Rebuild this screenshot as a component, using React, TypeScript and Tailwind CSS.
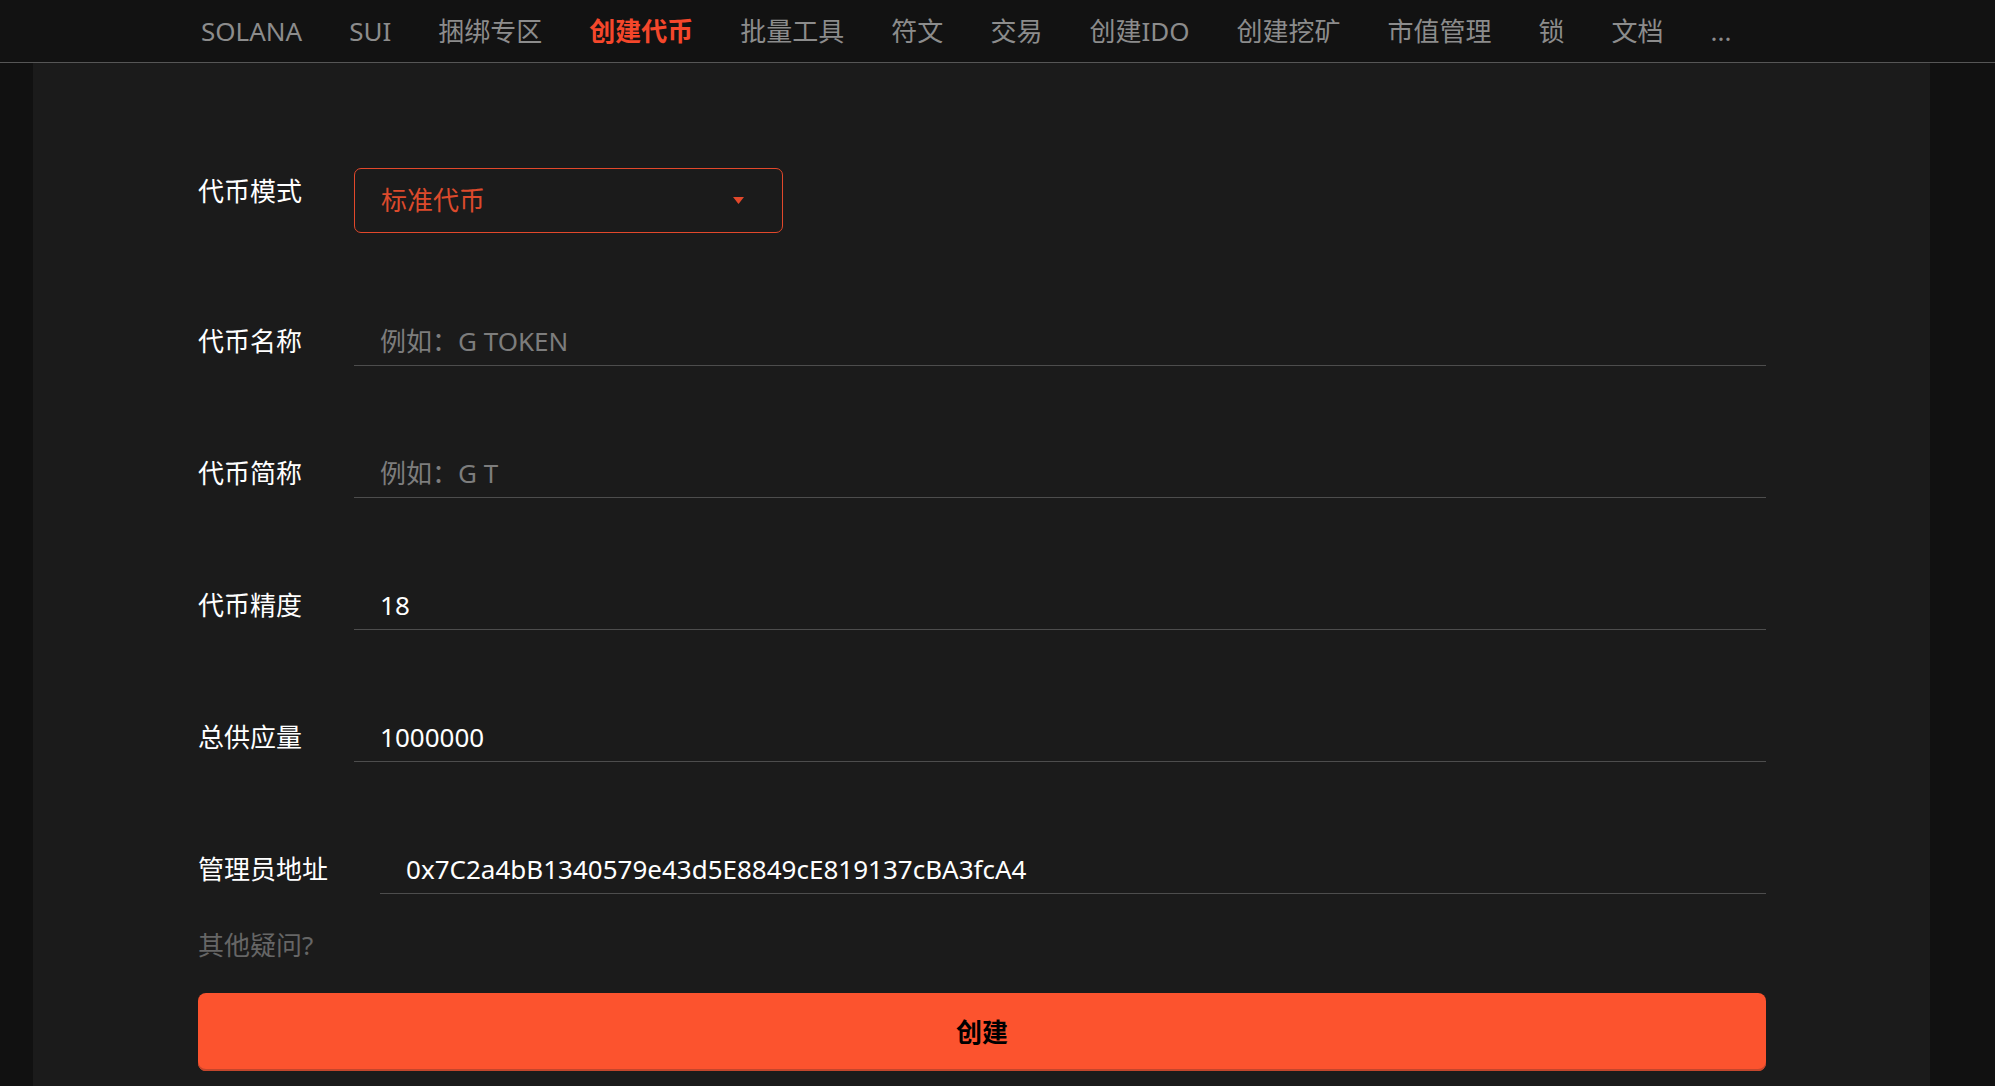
import React from 'react';

const navItems = ['SOLANA', 'SUI', '捆绑专区', '创建代币', '批量工具', '符文', '交易', '创建IDO', '创建挖矿', '市值管理', '锁', '文档', '...'];

const fields = [
  { label: '代币名称', placeholder: '例如：G TOKEN', value: '' },
  { label: '代币简称', placeholder: '例如：G T', value: '' },
  { label: '代币精度', placeholder: '', value: '18' },
  { label: '总供应量', placeholder: '', value: '1000000' },
  { label: '管理员地址', placeholder: '', value: '0x7C2a4bB1340579e43d5E8849cE819137cBA3fcA4' },
];

export default function App() {
  return (
    <div className="min-h-screen bg-[#111111] font-['Noto_Sans','Noto_Sans_CJK_SC',sans-serif]">
      <nav className="flex h-[63px] items-center gap-[47px] border-b border-[#565656] bg-[#121212] pl-[201px]">
        {navItems.map((item) => (
          <a
            key={item}
            className={`cursor-pointer text-[26px] leading-none ${
              item === '创建代币' ? 'font-bold text-[#f5472b]' : 'text-[#8c8c8c]'
            }`}
          >
            {item}
          </a>
        ))}
      </nav>

      <main className="ml-[33px] mr-[65px] min-h-[1023px] bg-[#1b1b1b] pl-[165px] pr-[164px] pt-[105px]">
        <div className="flex items-start gap-[52px]">
          <label className="pt-[4px] text-[26px] leading-[39px] whitespace-nowrap text-white">代币模式</label>
          <div className="flex h-[65px] w-[429px] cursor-pointer items-center justify-between rounded-[7px] border border-[#e2482b] pl-[26px] pr-[38px]">
            <span className="text-[26px] leading-[39px] text-[#dc4a2c]">标准代币</span>
            <svg width="11" height="7" viewBox="0 0 11 7">
              <path d="M0 0 H11 L5.5 7 Z" fill="#e2482b" />
            </svg>
          </div>
        </div>

        <div className="mt-[83px] flex flex-col gap-[82px]">
          {fields.map((f) => (
            <div key={f.label} className="flex items-center gap-[52px]">
              <label className="text-[26px] leading-[39px] whitespace-nowrap text-white">{f.label}</label>
              <input
                defaultValue={f.value}
                placeholder={f.placeholder}
                className="h-[50px] min-w-0 flex-1 border-b border-[#4d4d4d] bg-transparent pl-[26px] text-[26px] text-white outline-none placeholder:text-[#7d7d7d]"
              />
            </div>
          ))}
        </div>

        <p className="mt-[32px] text-[26px] leading-[39px] text-[#666666]">其他疑问?</p>

        <button className="mt-[28px] flex h-[78px] w-full items-center justify-center rounded-[8px] bg-[#fc532e] text-[26px] font-bold text-black shadow-[inset_0_-2px_0_#c4462c]">
          创建
        </button>
      </main>
    </div>
  );
}
